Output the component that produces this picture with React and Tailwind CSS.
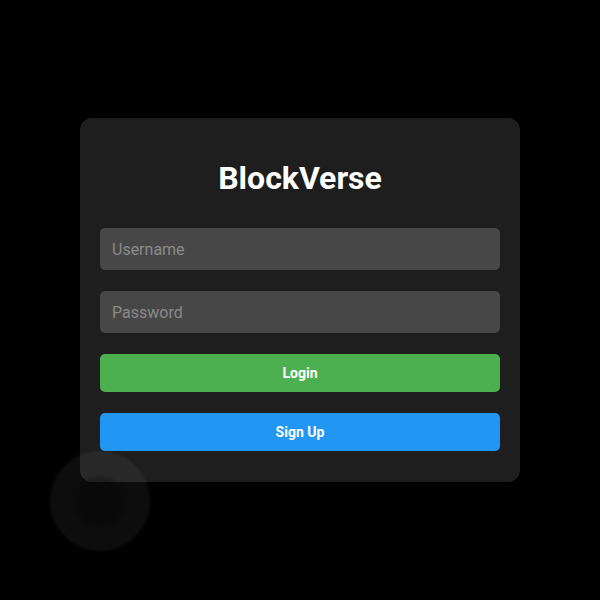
export default function App() {
  return (
    <div className="relative flex min-h-[600px] w-full items-center justify-center overflow-hidden bg-black font-['Roboto',sans-serif]">
      <div className="w-[440px] rounded-xl bg-[#1e1e1e] px-5 pt-[42px] pb-[31px]">
        <h1 className="mb-8 text-center text-[32px] leading-9 font-bold text-white">BlockVerse</h1>
        <form className="flex flex-col gap-[21px]">
          <input
            placeholder="Username"
            className="h-[42px] w-full rounded-[5px] bg-[#474747] px-3 text-base text-white placeholder-[#8a8a8a] outline-none"
          />
          <input
            type="password"
            placeholder="Password"
            className="h-[42px] w-full rounded-[5px] bg-[#474747] px-3 text-base text-white placeholder-[#8a8a8a] outline-none"
          />
          <button type="button" className="h-[38px] w-full rounded-[5px] bg-[#4caf50] text-sm font-bold text-white">
            Login
          </button>
          <button type="button" className="h-[38px] w-full rounded-[5px] bg-[#2196f3] text-sm font-bold text-white">
            Sign Up
          </button>
        </form>
      </div>

      {/* decorative glow bottom-left */}
      <div className="pointer-events-none absolute top-[451px] left-[50px] flex h-[100px] w-[100px] items-center justify-center rounded-full bg-white/[0.05] blur-[1px]">
        <div className="h-[50px] w-[50px] rounded-full bg-black/25 blur-[2px]" />
      </div>
    </div>
  )
}
